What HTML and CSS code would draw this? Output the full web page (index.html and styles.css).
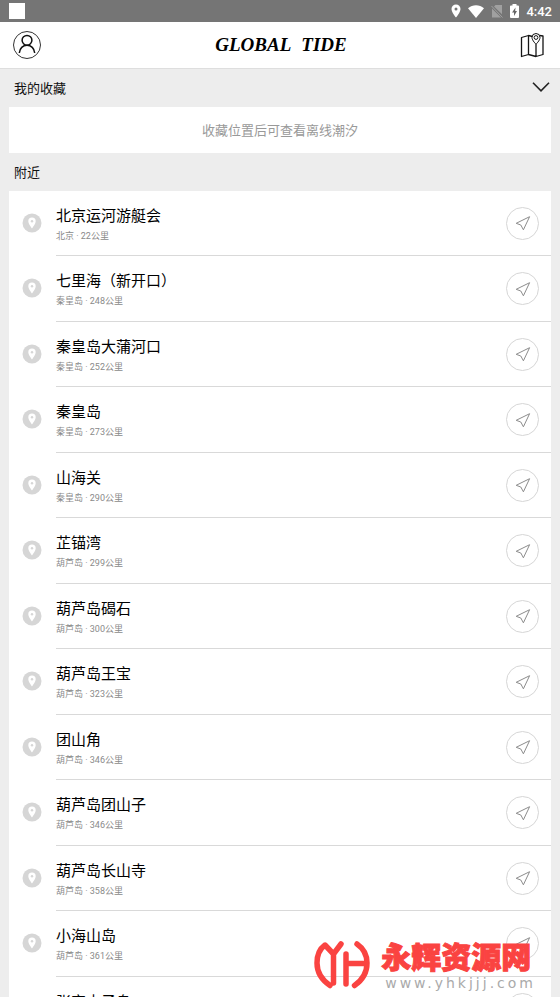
FILE: index.html
```html
<!DOCTYPE html>
<html lang="zh-CN">
<head>
<meta charset="utf-8">
<meta name="viewport" content="width=device-width, initial-scale=1">
<title>GLOBAL TIDE</title>
<link rel="stylesheet" href="styles.css">
</head>
<body>
<svg class="defs" aria-hidden="true">
  <symbol id="pin" viewBox="0 0 20 20">
    <circle cx="10" cy="10" r="9.5" fill="#d6d6d6"/>
    <path d="M10 4.6a3.7 3.7 0 0 0-3.7 3.7c0 2.6 3.7 7.2 3.7 7.2s3.7-4.6 3.7-7.2A3.7 3.7 0 0 0 10 4.6z" fill="#fff"/>
    <circle cx="10" cy="8.3" r="1.2" fill="#d6d6d6"/>
  </symbol>
  <symbol id="arrow" viewBox="0 0 16 16">
    <path d="M14.600 1.700 1.200 8.300l4.600 1.700 2.600 4.800z" fill="none" stroke="#8c8c8c" stroke-linejoin="round"/>
  </symbol>
</svg>
<div class="status">
  <span class="status-app"></span>
  <div class="status-icons">
    <svg width="10" height="14" viewBox="0 0 10 14"><path fill="#fff" fill-rule="evenodd" d="M5 .5A4.500 4.500 0 0 0 .5 5C.5 8.300 5 13.500 5 13.500S9.500 8.300 9.500 5A4.500 4.500 0 0 0 5 .5zm0 3a1.500 1.500 0 1 1 0 3 1.500 1.500 0 0 1 0-3z"/></svg>
    <svg width="16" height="13" viewBox="0 0 16 13"><path fill="#fff" d="M0 3.200C4.500-.7 11.500-.7 16 3.200L8 13z"/></svg>
    <svg width="12" height="13" viewBox="0 0 12 13"><path fill="#a0a0a0" d="M4.500 0H11v9.300L3 1.500zM1 3.500l9 9H1z"/><path d="M.5 1 11.500 12.500" stroke="#a0a0a0"/></svg>
    <svg width="9" height="14" viewBox="0 0 9 14"><path fill="#fff" d="M2.500 1.500V0h4v1.500H8a1 1 0 0 1 1 1V13a1 1 0 0 1-1 1H1a1 1 0 0 1-1-1V2.500a1 1 0 0 1 1-1z"/><path fill="#666" d="M5.500 3.500 2 8.500h2v3.500l3-5H5.200z"/></svg>
    <span class="clock">4:42</span>
  </div>
</div>
<header class="header">
  <button class="icon-button" aria-label="账户">
    <svg width="30" height="30" viewBox="0 0 30 30" fill="none" stroke="#333"><circle cx="15" cy="15" r="13.500"/><g stroke="#111" stroke-width="1.500"><circle cx="15" cy="10.300" r="4.900"/><path d="M7.300 23c.3-4.600 3.600-7.800 7.700-7.800s7.400 3.200 7.700 7.800"/></g></svg>
  </button>
  <h1 class="title"><span>GLOBAL</span><span>TIDE</span></h1>
  <button class="icon-button" aria-label="地图">
    <svg width="24" height="26" viewBox="0 0 24 26" fill="none" stroke="#151515" stroke-width="1.300" stroke-linejoin="round"><path d="M12.500 4.500 8.500 3.500 1.500 5.500v19L8.500 22.500l7.500 2 7-2V4L19.500 3.500M8.500 3.500v19M16 12v12.500"/><path fill="#fff" stroke-width="1" d="M16 1.500a4 4 0 0 0-4 4c0 3 4 6.700 4 6.700s4-3.700 4-6.700a4 4 0 0 0-4-4z"/><circle cx="16" cy="5.500" r="1.900" stroke-width="1"/></svg>
  </button>
</header>
<main class="content">
  <div class="section-head">
    <h2>我的收藏</h2>
    <button class="icon-button" aria-label="展开收藏"><svg width="18" height="10" viewBox="0 0 18 10" fill="none" stroke="#222" stroke-width="1.600"><path d="M1 .8 9 8.800 17 .8"/></svg></button>
  </div>
  <p class="empty">收藏位置后可查看离线潮汐</p>
  <div class="section-head"><h2>附近</h2></div>
  <ul class="places" id="places"></ul>
</main>
<div class="brand">
  <svg width="56" height="50" viewBox="0 0 56 50" fill="none" stroke="#fa4341" stroke-width="5.500" stroke-linecap="round" stroke-linejoin="round"><path d="M27 3 19.500 13 11 4C5.500 8 3 14 3 22c0 10 5 17 13 22.500M19.500 13v29M32 13v30M32 22.500h20M43 3c6.500 4.500 10 11 10 19 0 10-4.500 17-12.500 22.500"/></svg>
  <div class="brand-text">
    <strong>永辉资源网</strong>
    <span>www.yhkjjj.com</span>
  </div>
</div>
<script src="places.js"></script>
</body>
</html>
```
FILE: styles.css
```css
* {
  box-sizing: border-box;
}

body {
  display: flex;
  flex-direction: column;
  height: 100vh;
  margin: 0;
  overflow: hidden;
  position: relative;
  background: #ededed;
  color: #111;
  font-family: Roboto, "Noto Sans CJK SC", sans-serif;
}

h1, h2, h3, p, ul {
  margin: 0;
  padding: 0;
}

button {
  display: flex;
  align-items: center;
  justify-content: center;
  padding: 0;
  border: 0;
  background: none;
}

svg {
  display: block;
}

.defs {
  position: absolute;
  width: 0;
  height: 0;
}

.status {
  display: flex;
  flex: none;
  align-items: center;
  justify-content: space-between;
  height: 22px;
  padding: 0 8px 0 9px;
  background: #757575;
}

.status-app {
  width: 16px;
  height: 16px;
  background: #fff;
}

.status-icons {
  display: flex;
  align-items: center;
  gap: 7px;
}

.clock {
  color: #fff;
  font-size: 13px;
  font-weight: 500;
}

.header {
  display: flex;
  flex: none;
  align-items: center;
  justify-content: space-between;
  height: 47px;
  padding: 0 16px 0 12px;
  border-bottom: 1px solid #dedede;
  background: #fff;
}

.title {
  display: flex;
  gap: 10px;
  color: #000;
  font: italic bold 19px/24px "Liberation Serif", serif;
}

.content {
  display: flex;
  flex: 1;
  flex-direction: column;
  min-height: 0;
  padding: 0 9px;
}

.section-head {
  display: flex;
  flex: none;
  align-items: center;
  justify-content: space-between;
  height: 38px;
  padding: 0 1px 2px 5px;
}

.section-head h2 {
  font-size: 13px;
  font-weight: 400;
}

.empty {
  flex: none;
  padding: 14px 12px 12px;
  background: #fff;
  color: #999;
  font-size: 13px;
  line-height: 20px;
  text-align: center;
}

.places {
  flex: 1;
  min-height: 0;
  overflow: hidden;
  background: #fff;
  list-style: none;
}

.place {
  display: flex;
  align-items: center;
  height: 65px;
  padding-left: 13px;
}

.place:nth-child(even) {
  height: 66px;
}

.place-pin {
  margin-bottom: 2px;
}

.place-body {
  display: flex;
  flex: 1;
  align-items: center;
  justify-content: space-between;
  height: 100%;
  margin-left: 14px;
  padding-right: 12px;
  border-bottom: 1px solid #d9d9d9;
}

.place-text {
  padding-top: 3px;
}

.place-name {
  color: #000;
  font-size: 15px;
  font-weight: 400;
  line-height: 22px;
}

.place-info {
  color: #8a8a8a;
  font-size: 9px;
  line-height: 18px;
}

.go {
  width: 33px;
  height: 33px;
  border: 1px solid #d6d6d6;
  border-radius: 50%;
}

.brand {
  display: flex;
  position: absolute;
  right: 24px;
  bottom: 6px;
  align-items: center;
  gap: 11px;
}

.brand-text {
  display: flex;
  flex-direction: column;
}

.brand strong {
  color: #fa4341;
  font-size: 30px;
  font-weight: 900;
  line-height: 34px;
  -webkit-text-stroke: 1px #fa4341;
}

.brand span {
  padding-left: 4px;
  color: #aaa;
  font-family: "DejaVu Sans", sans-serif;
  font-size: 14px;
  letter-spacing: 3px;
  line-height: 16px;
}
```
FILE: places.js
```js
const places = [
  ["北京运河游艇会", "北京", 22],
  ["七里海（新开口）", "秦皇岛", 248],
  ["秦皇岛大蒲河口", "秦皇岛", 252],
  ["秦皇岛", "秦皇岛", 273],
  ["山海关", "秦皇岛", 290],
  ["芷锚湾", "葫芦岛", 299],
  ["葫芦岛碣石", "葫芦岛", 300],
  ["葫芦岛王宝", "葫芦岛", 323],
  ["团山角", "葫芦岛", 346],
  ["葫芦岛团山子", "葫芦岛", 346],
  ["葫芦岛长山寺", "葫芦岛", 358],
  ["小海山岛", "葫芦岛", 361],
  ["张家山子岛"]
];

document.getElementById("places").innerHTML = places.map(([name, city, km]) => `
  <li class="place">
    <svg class="place-pin" width="20" height="20"><use href="#pin"/></svg>
    <div class="place-body">
      <div class="place-text">
        <h3 class="place-name">${name}</h3>
        <p class="place-info">${city ? `${city} · ${km}公里` : "&nbsp;"}</p>
      </div>
      <button class="go" aria-label="导航到${name}"><svg width="16" height="16"><use href="#arrow"/></svg></button>
    </div>
  </li>`).join("");
```
